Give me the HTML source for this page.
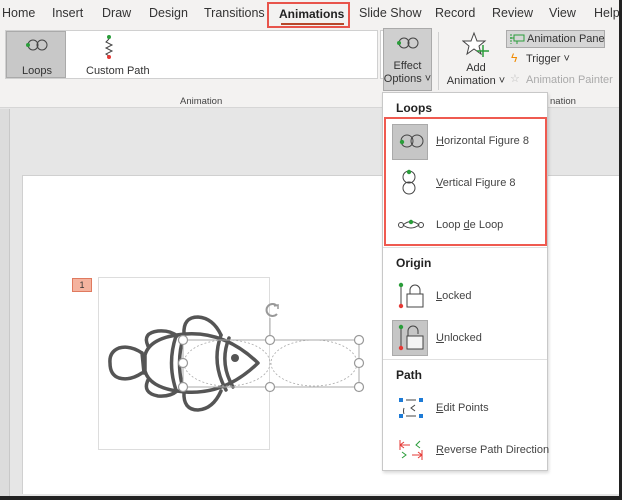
<!DOCTYPE html>
<html><head><meta charset="utf-8"><style>
*{margin:0;padding:0;box-sizing:border-box}
body{width:622px;height:500px;overflow:hidden;background:#e6e6e6;font-family:"Liberation Sans",sans-serif;font-size:12px;color:#333;position:relative}
.abs{position:absolute}
.tabs{left:0;top:0;width:622px;height:28px;background:#f3f2f1}
.tab{position:absolute;top:6px;font-size:12.5px;color:#333;white-space:nowrap}
.ribbon{left:0;top:28px;width:622px;height:80px;background:#f3f2f1;border-bottom:1px solid #d6d6d6}
.menu{left:382px;top:92px;width:166px;height:379px;background:#fff;border:1px solid #c8c8c8;box-shadow:1px 2px 3px rgba(0,0,0,.15)}
.hd{position:absolute;left:13px;font-weight:bold;font-size:12px;color:#222}
.it{position:absolute;left:53px;font-size:11px;color:#444;white-space:nowrap}
.sel{position:absolute;left:9px;width:36px;height:36px;background:#c6c6c6;border:1px solid #aaa}
</style></head><body>
<div class="abs tabs">
<span class="tab" style="left:2px">Home</span>
<span class="tab" style="left:52px">Insert</span>
<span class="tab" style="left:102px">Draw</span>
<span class="tab" style="left:149px">Design</span>
<span class="tab" style="left:204px">Transitions</span>
<span class="tab" style="left:279px;font-weight:bold;color:#222;font-size:12px;top:7px">Animations</span>
<span class="tab" style="left:359px">Slide Show</span>
<span class="tab" style="left:435px">Record</span>
<span class="tab" style="left:492px">Review</span>
<span class="tab" style="left:549px">View</span>
<span class="tab" style="left:594px">Help</span>
<div class="abs" style="left:281px;top:23px;width:63px;height:2px;background:#b7472a"></div>
<div class="abs" style="left:267px;top:2px;width:83px;height:26px;border:2px solid #e8544b"></div>
</div>
<div class="abs ribbon">
<div class="abs" style="left:5px;top:2px;width:373px;height:49px;background:#fff;border:1px solid #d0d0d0"></div>
<div class="abs" style="left:6px;top:3px;width:60px;height:47px;background:#c8c8c8;border:1px solid #aaa"></div>
<svg class="abs" style="left:25px;top:10px" width="24" height="14"><circle cx="8" cy="7" r="5" fill="none" stroke="#444"/><circle cx="17" cy="7" r="5" fill="none" stroke="#444"/><circle cx="3" cy="7" r="2" fill="#2a9d3a"/></svg>
<div class="abs" style="left:22px;top:37px;font-size:11px">Loops</div>
<svg class="abs" style="left:103px;top:6px" width="12" height="26"><circle cx="6" cy="3" r="2" fill="#2a9d3a"/><path d="M6 5 L3 8 L9 11 L3 14 L9 17 L3 20 L6 22" fill="none" stroke="#444"/><circle cx="6" cy="23" r="2" fill="#e53935"/></svg>
<div class="abs" style="left:86px;top:37px;font-size:11px">Custom Path</div>
<div class="abs" style="left:380px;top:2px;width:11px;height:49px;background:#fff;border:1px solid #d0d0d0;font-size:8px;text-align:center;line-height:16px;color:#555">˄<br><span style="color:#bbb">˅</span><br>⩡</div>
<div class="abs" style="left:383px;top:0px;width:49px;height:63px;background:#cfcfcf;border:1px solid #aaa"></div>
<svg class="abs" style="left:395px;top:8px" width="26" height="14"><circle cx="9" cy="7" r="5" fill="none" stroke="#444"/><circle cx="18" cy="7" r="5" fill="none" stroke="#444"/><circle cx="4" cy="7" r="2" fill="#2a9d3a"/></svg>
<div class="abs" style="left:383px;top:32px;width:49px;text-align:center;font-size:11px;line-height:13px">Effect<br>Options ˅</div>
<div class="abs" style="left:438px;top:4px;width:1px;height:58px;background:#d0d0d0"></div>
<svg class="abs" style="left:462px;top:3px" width="30" height="28"><path d="M12 2 L15 10 L23 10 L17 15 L19 23 L12 18 L5 23 L7 15 L1 10 L9 10Z" fill="#fff" stroke="#444"/><path d="M21 14 V26 M15 20 H27" stroke="#2a9d3a" stroke-width="1.5"/></svg>
<div class="abs" style="left:444px;top:34px;width:64px;text-align:center;font-size:11px;line-height:13px">Add<br>Animation ˅</div>
<div class="abs" style="left:506px;top:2px;width:99px;height:18px;background:#d6d6d6;border:1px solid #aaa"></div>
<svg class="abs" style="left:509px;top:5px" width="16" height="12"><path d="M2 1V11" stroke="#2a9d3a" stroke-dasharray="2 1"/><rect x="5" y="2" width="10" height="6" fill="none" stroke="#2a9d3a"/><path d="M5 5H1M8 8V11" stroke="#2a9d3a"/></svg>
<div class="abs" style="left:527px;top:5px;font-size:11px">Animation Pane</div>
<div class="abs" style="left:511px;top:23px;color:#f08a00;font-size:12px">ϟ</div>
<div class="abs" style="left:526px;top:25px;font-size:11px">Trigger ˅</div>
<div class="abs" style="left:510px;top:44px;color:#bbb;font-size:11px">☆</div>
<div class="abs" style="left:526px;top:46px;font-size:11px;color:#aaa">Animation Painter</div>
<div class="abs" style="left:180px;top:68px;font-size:9.5px;color:#444">Animation</div>
<div class="abs" style="left:550px;top:68px;font-size:9.5px;color:#444">nation</div>
</div>
<div class="abs" style="left:0;top:109px;width:10px;height:391px;background:#dcdcdc;border-right:1px solid #c8c8c8"></div>
<div class="abs" style="left:22px;top:175px;width:597px;height:319px;background:#fff;border-top:1px solid #d0d0d0;border-left:1px solid #d0d0d0"></div>
<div class="abs" style="left:619px;top:0;width:3px;height:500px;background:#222"></div>
<div class="abs" style="left:0;top:496px;width:622px;height:4px;background:#222"></div>
<div class="abs" style="left:98px;top:277px;width:172px;height:173px;border:1px solid #ddd"></div>
<div class="abs" style="left:72px;top:278px;width:20px;height:14px;background:#f4b39f;border:1px solid #e07a5f;font-size:9px;text-align:center;line-height:12px">1</div>
<svg class="abs" style="left:0;top:0" width="622" height="500">
<g fill="none" stroke="#555" stroke-width="3.5" stroke-linecap="round" stroke-linejoin="round">
<path d="M142 353 Q130 345 119 348 Q109 352 110 363 Q110 375 119 378 Q130 381 142 373"/>
<path d="M142 353 L144 373"/>
<path d="M145 355 Q150 337 185 334 Q225 331 258 363 Q225 395 185 392 Q150 389 145 371 Z"/>
<path d="M148 346 Q142 333 158 331 Q170 330 177 336"/>
<path d="M148 380 Q142 393 158 396 Q170 397 177 391"/>
<path d="M184 334 Q183 317 198 317 Q213 318 221 335"/>
<path d="M184 392 Q183 410 198 410 Q213 409 221 391"/>
<path d="M176 336 Q167 363 176 390"/>
<path d="M184 335 Q175 363 184 392"/>
<path d="M221 335 Q211 363 226 390"/>
<path d="M229 338 Q219 363 233 387"/>
</g>
<circle cx="235" cy="358" r="4" fill="#555"/>
<g fill="none" stroke="#aaa" stroke-width="0.8" stroke-dasharray="2 2">
<ellipse cx="227" cy="363" rx="43" ry="23"/><ellipse cx="314" cy="363" rx="43" ry="23"/></g>
<rect x="183" y="340" width="176" height="47" fill="none" stroke="#aaa"/>
<line x1="270" y1="318" x2="270" y2="340" stroke="#aaa"/>
<g fill="#fff" stroke="#999" stroke-width="1.2">
<circle cx="183" cy="340" r="4.5"/><circle cx="270" cy="340" r="4.5"/><circle cx="359" cy="340" r="4.5"/>
<circle cx="183" cy="363" r="4.5"/><circle cx="359" cy="363" r="4.5"/>
<circle cx="183" cy="387" r="4.5"/><circle cx="270" cy="387" r="4.5"/><circle cx="359" cy="387" r="4.5"/></g>
<path d="M277 314 A6 6 0 1 1 277 306" fill="none" stroke="#999" stroke-width="2"/>
<path d="M274 306 L278 305 L278 309" fill="none" stroke="#999" stroke-width="1.5"/>
</svg>
<div class="abs menu">
<div class="hd" style="top:8px">Loops</div>
<div class="sel" style="top:31px"></div>
<svg class="abs" style="left:14px;top:40px" width="28" height="16"><circle cx="10" cy="8" r="6" fill="none" stroke="#444"/><circle cx="20" cy="8" r="6" fill="none" stroke="#444"/><circle cx="5" cy="9" r="2.2" fill="#2a9d3a"/></svg>
<div class="it" style="top:42px"><u>H</u>orizontal Figure 8</div>
<svg class="abs" style="left:18px;top:76px" width="16" height="28"><circle cx="8" cy="8" r="6" fill="none" stroke="#444"/><circle cx="8" cy="19" r="6" fill="none" stroke="#444"/><circle cx="8" cy="3" r="2.2" fill="#2a9d3a"/></svg>
<div class="it" style="top:84px"><u>V</u>ertical Figure 8</div>
<svg class="abs" style="left:14px;top:126px" width="28" height="12"><circle cx="4" cy="6" r="2.5" fill="none" stroke="#444"/><circle cx="24" cy="6" r="2.5" fill="none" stroke="#444"/><path d="M6 6 Q14 -1 22 6 Q14 12 6 6" fill="none" stroke="#444"/><circle cx="14" cy="3" r="2.2" fill="#2a9d3a"/></svg>
<div class="it" style="top:126px">Loop <u>d</u>e Loop</div>
<div class="abs" style="left:1px;top:24px;width:163px;height:129px;border:2px solid #ef5a50"></div>
<div class="abs" style="left:0;top:154px;width:164px;height:1px;background:#e0e0e0"></div>
<div class="hd" style="top:163px">Origin</div>
<svg class="abs" style="left:15px;top:189px" width="30" height="28"><path d="M3 3V24" stroke="#444"/><circle cx="3" cy="3" r="2.2" fill="#2a9d3a"/><circle cx="3" cy="24" r="2.2" fill="#e53935"/><path d="M12 12V8 A5 5 0 0 1 22 8V12" fill="none" stroke="#444"/><rect x="9" y="12" width="16" height="13" fill="#fff" stroke="#444"/></svg>
<div class="it" style="top:197px"><u>L</u>ocked</div>
<div class="sel" style="top:227px"></div>
<svg class="abs" style="left:15px;top:231px" width="30" height="28"><path d="M3 3V24" stroke="#444"/><circle cx="3" cy="3" r="2.2" fill="#2a9d3a"/><circle cx="3" cy="24" r="2.2" fill="#e53935"/><path d="M10 12V7 A5 5 0 0 1 20 7V10" fill="none" stroke="#444"/><rect x="9" y="12" width="16" height="13" fill="#f4f4f4" stroke="#444"/></svg>
<div class="it" style="top:239px"><u>U</u>nlocked</div>
<div class="abs" style="left:0;top:266px;width:164px;height:1px;background:#e0e0e0"></div>
<div class="hd" style="top:275px">Path</div>
<svg class="abs" style="left:15px;top:304px" width="26" height="22"><path d="M8 3H18M8 19H18M6 11 Q5 14 6 17M17 8L13 11L17 14" fill="none" stroke="#444"/><g fill="#1e7bd6"><rect x="1" y="1" width="4" height="4"/><rect x="21" y="1" width="4" height="4"/><rect x="1" y="17" width="4" height="4"/><rect x="21" y="17" width="4" height="4"/></g></svg>
<div class="it" style="top:309px"><u>E</u>dit Points</div>
<svg class="abs" style="left:15px;top:345px" width="26" height="24"><path d="M2 2V12M2 7H12M2 7L6 4M2 7L6 10M24 12V22M14 17H24M24 17L20 14M24 17L20 20" fill="none" stroke="#e53935"/><path d="M22 3L18 7L22 10M4 14L8 17L4 20" fill="none" stroke="#2a9d3a"/></svg>
<div class="it" style="top:351px"><u>R</u>everse Path Direction</div>
</div>
</body></html>
